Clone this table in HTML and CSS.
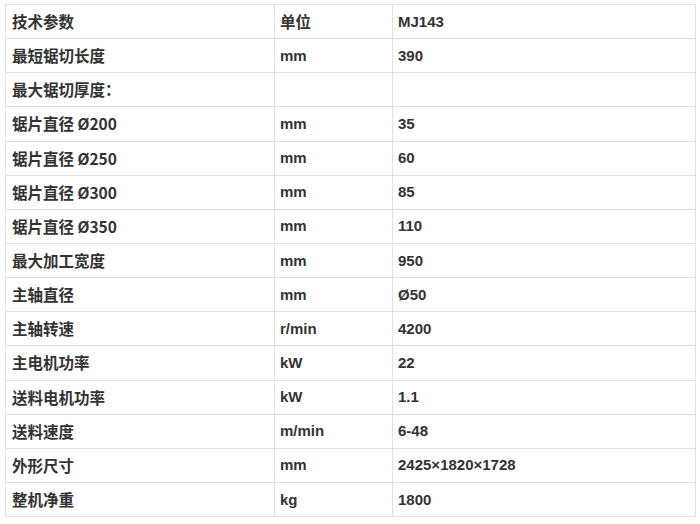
FILE: index.html
```html
<!DOCTYPE html>
<html lang="zh">
<head>
<meta charset="utf-8">
<link rel="stylesheet" href="styles.css">
</head>
<body>
<table class="spec">
  <colgroup><col class="c1"><col class="c2"><col class="c3"></colgroup>
  <tr><td class="zh">技术参数</td><td class="zh">单位</td><td>MJ143</td></tr>
  <tr><td class="zh">最短锯切长度</td><td>mm</td><td>390</td></tr>
  <tr><td class="zh">最大锯切厚度：</td><td></td><td></td></tr>
  <tr><td class="zh">锯片直径 Ø200</td><td>mm</td><td>35</td></tr>
  <tr><td class="zh">锯片直径 Ø250</td><td>mm</td><td>60</td></tr>
  <tr><td class="zh">锯片直径 Ø300</td><td>mm</td><td>85</td></tr>
  <tr><td class="zh">锯片直径 Ø350</td><td>mm</td><td>110</td></tr>
  <tr><td class="zh">最大加工宽度</td><td>mm</td><td>950</td></tr>
  <tr><td class="zh">主轴直径</td><td>mm</td><td>Ø50</td></tr>
  <tr><td class="zh">主轴转速</td><td>r/min</td><td>4200</td></tr>
  <tr><td class="zh">主电机功率</td><td>kW</td><td>22</td></tr>
  <tr><td class="zh">送料电机功率</td><td>kW</td><td>1.1</td></tr>
  <tr><td class="zh">送料速度</td><td>m/min</td><td>6-48</td></tr>
  <tr><td class="zh">外形尺寸</td><td>mm</td><td>2425×1820×1728</td></tr>
  <tr><td class="zh">整机净重</td><td>kg</td><td>1800</td></tr>
</table>
</body>
</html>
```
FILE: styles.css
```css
html, body {
  background: #ffffff;
}
body {
  margin: 4px 0 0 5px;
  color: #333333;
  font-family: "Liberation Sans", Arial, "Noto Sans CJK SC", sans-serif;
  font-weight: 700;
  font-size: 15px;
}
.spec {
  border-collapse: collapse;
  table-layout: fixed;
  width: 690px;
}
.c1 { width: 269px; }
.c2 { width: 118px; }
.c3 { width: 303px; }
.spec td {
  border: 1px solid #e2e2e2;
  height: 34.15px;
  padding: 0 6px 1px 6px;
  box-sizing: border-box;
  vertical-align: middle;
  white-space: nowrap;
}
.spec td:nth-child(n+2) {
  padding-left: 5px;
}
.zh {
  font-family: "Noto Sans CJK SC", sans-serif;
  font-size: 15.5px;
  font-weight: 700;
  color: #333333;
}
```
